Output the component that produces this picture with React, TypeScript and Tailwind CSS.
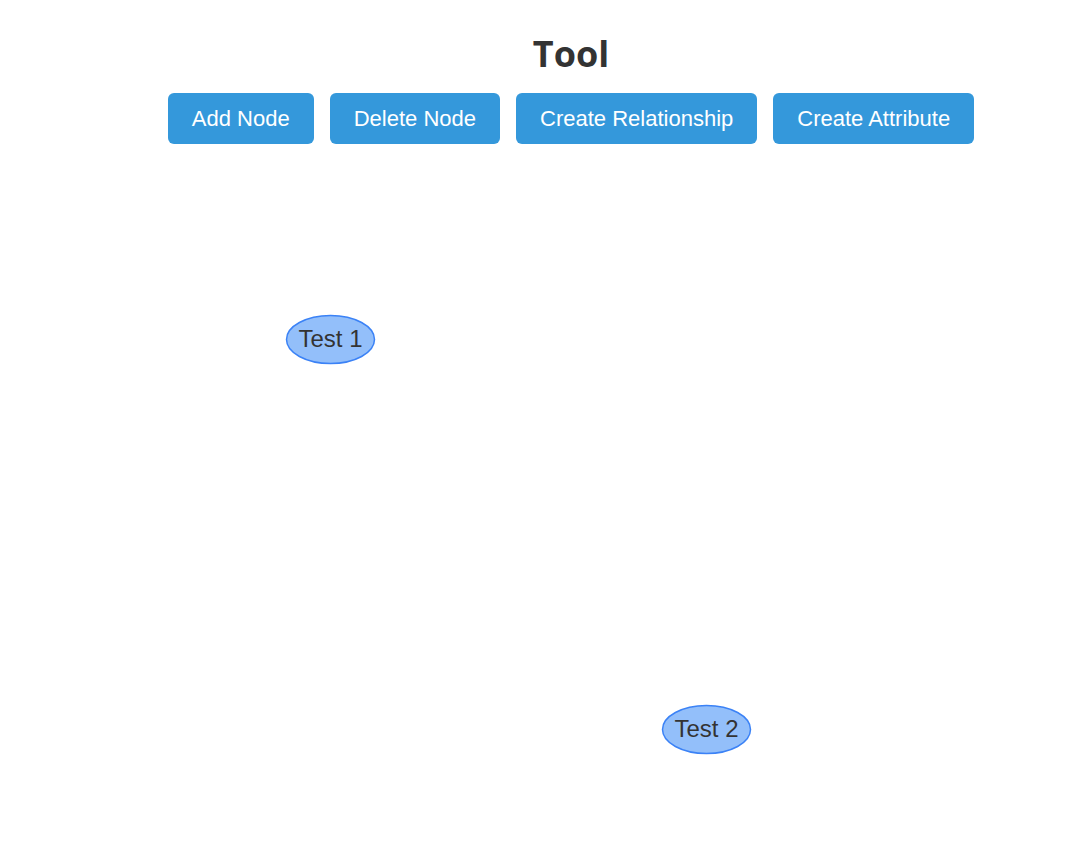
const nodes = [
  { id: 1, label: "Test 1", x: 330.5, y: 339.5 },
  { id: 2, label: "Test 2", x: 706.5, y: 729.5 },
]

const actions = ["Add Node", "Delete Node", "Create Relationship", "Create Attribute"]

export default function App() {
  return (
    <div className="relative h-[855px] w-full overflow-hidden bg-white">
      <div className="flex flex-col items-center pl-[68px]">
        <h1 className="mt-[32px] text-[36px] leading-[44px] font-bold text-[#333333] [font-family:'Open_Sans',sans-serif]">
          Tool
        </h1>
        <div className="mt-[17px] flex gap-4">
          {actions.map((label) => (
            <button
              key={label}
              className="h-[51px] rounded-md bg-[#3498db] px-[24px] text-[22px] text-white [font-family:'Liberation_Sans',Arial,sans-serif]"
            >
              {label}
            </button>
          ))}
        </div>
      </div>

      {/* canvas with nodes */}
      <svg className="absolute top-0 left-0" width="1074" height="855">
        {nodes.map((n) => (
          <g key={n.id}>
            <ellipse cx={n.x} cy={n.y} rx="44" ry="24" fill="#93bffa" stroke="#3b82f6" strokeWidth="1.5" />
            <text
              x={n.x}
              y={n.y + 7}
              textAnchor="middle"
              fontSize="24"
              fill="#333333"
              fontFamily="Liberation Sans, Arial, sans-serif"
            >
              {n.label}
            </text>
          </g>
        ))}
      </svg>
    </div>
  )
}
